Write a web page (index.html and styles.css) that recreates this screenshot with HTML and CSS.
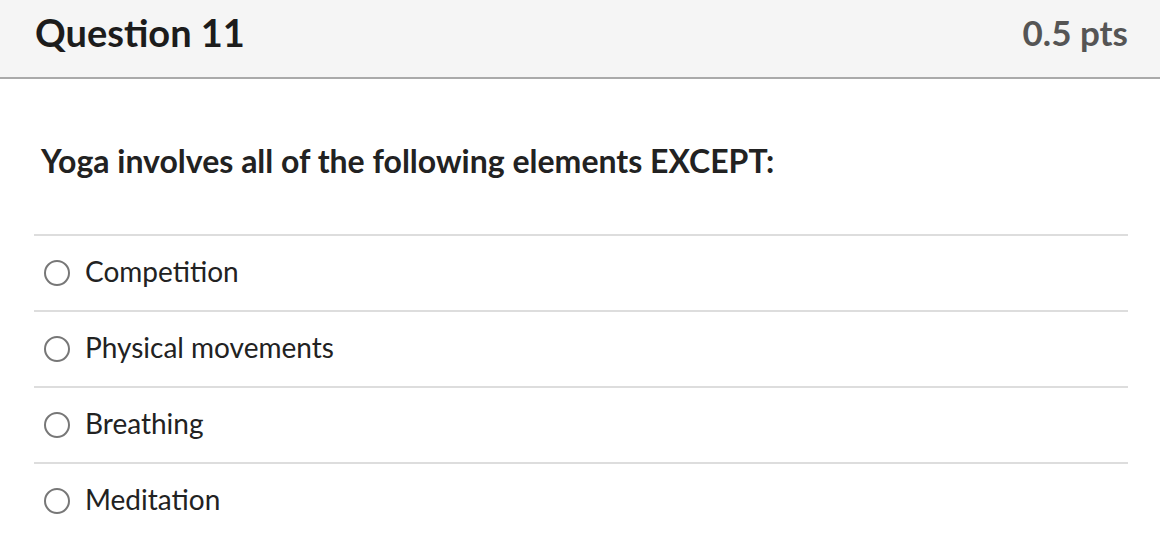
FILE: index.html
```html
<!DOCTYPE html>
<html lang="en">
<head>
    <meta charset="UTF-8">
    <title>Question 11</title>
    <link rel="stylesheet" href="styles.css">
</head>
<body>
    <div class="question">
        <div class="question-header">
            <h2>Question 11</h2>
            <span class="points">0.5 pts</span>
        </div>
        <div class="question-body">
            <p class="question-text">Yoga involves all of the following elements EXCEPT:</p>
            <div class="answers">
                <label class="answer"><span class="radio"></span>Competition</label>
                <label class="answer"><span class="radio"></span>Physical movements</label>
                <label class="answer"><span class="radio"></span>Breathing</label>
                <label class="answer"><span class="radio"></span>Meditation</label>
            </div>
        </div>
    </div>
</body>
</html>
```

FILE: styles.css
```css
body {
    margin: 0;
    font-family: 'Lato', 'Liberation Sans', sans-serif;
    color: #222;
    background: white;
}

.question-header {
    display: flex;
    justify-content: space-between;
    align-items: center;
    height: 64px;
    padding: 0 32px 13px 35px;
    background-color: #f5f5f5;
    border-bottom: 2px solid #aaa;
}

.question-header h2 {
    margin: 0;
    font-size: 38px;
    font-weight: bold;
    color: #1c1c1c;
}

.points {
    font-size: 35px;
    font-weight: bold;
    color: #555;
}

.question-body {
    padding: 0 32px 0 34px;
}

.question-text {
    margin: 0;
    padding: 63px 0 54px 7px;
    font-size: 32px;
    font-weight: bold;
    line-height: 38px;
}

.answers {
    border-top: 2px solid #ddd;
}

.answer {
    display: flex;
    align-items: center;
    height: 70px;
    padding: 0 0 4px 10px;
    font-size: 28px;
    border-bottom: 2px solid #ddd;
}

.answer:last-child {
    border-bottom: none;
}

.radio {
    width: 22px;
    height: 22px;
    margin: 4px 15px 0 0;
    border: 2px solid #777;
    border-radius: 50%;
    flex-shrink: 0;
}
```
